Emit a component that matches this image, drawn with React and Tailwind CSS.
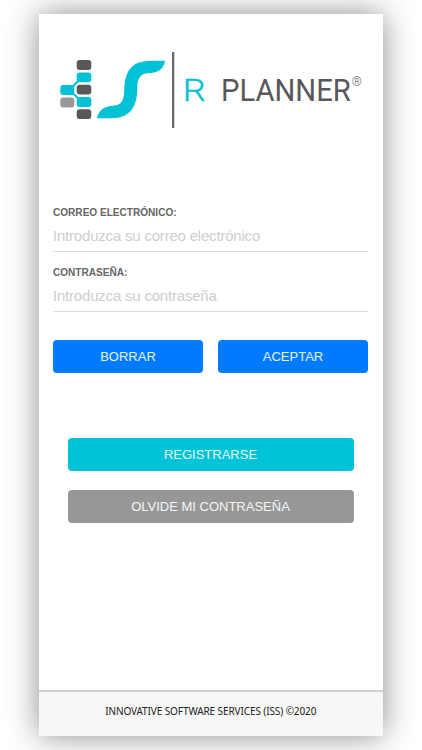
// ============================================================
// Pantalla de acceso de R Planner
// ============================================================

// ── LOGO ──────────────────────────────────────────────────────
function Logo() {
  return (
    <svg viewBox="0 0 315 80" className="block w-[315px] h-[80px]" role="img" aria-label="R Planner">
      {/* Columna de bloques */}
      <g fill="#58585a">
        <rect x="23.7" y="10" width="14.6" height="9.9" rx="3" />
        <rect x="23.7" y="34.7" width="14.6" height="9.9" rx="3" />
        <rect x="23.7" y="59.2" width="14.6" height="9.9" rx="3" />
      </g>
      <g fill="#00c1d5">
        <rect x="23.7" y="22.4" width="14.6" height="9.9" rx="3" />
        <rect x="23.7" y="47" width="14.6" height="9.9" rx="3" />
        <rect x="7.3" y="35" width="14" height="9.9" rx="3" />
      </g>
      <rect x="7.3" y="47.5" width="14" height="10" rx="3" fill="#97989a" />
      {/* Conectores */}
      <path d="M18.5 36.2 20.5 35.8 25.5 30.8M19 43.6 21 44.2 26 49.2" fill="none" stroke="#00c1d5" strokeWidth="2" />
      {/* Letra S ondulada */}
      <path
        d="M44 68.3C45.3 60 52 56 60.3 55.7C68.7 55.3 71 50 71.3 40C71.7 23.3 77 11 97 10.7L112 10.7C111 18.3 105.3 22.7 97 23C87 23.3 84.3 28.3 84.3 38.3C84.3 56.7 77 68.3 58.7 68.3Z"
        fill="#00c1d5"
      />
      <rect x="119" y="2" width="2.3" height="76" fill="#6b6b6d" />
      <g className="font-['Roboto',sans-serif]">
        <text x="129.7" y="51" fontSize="31" fontWeight="300" textLength="23" lengthAdjust="spacingAndGlyphs" fill="#00c1d5" stroke="#00c1d5" strokeWidth="0.4">R</text>
        <text transform="translate(168 51) scale(0.943 1)" fontSize="31" fill="#58585a">PLANNER</text>
        <text x="298.8" y="36.4" fontSize="12.6" fontWeight="300" fill="#58585a">®</text>
      </g>
    </svg>
  )
}

// ── CAMPO ─────────────────────────────────────────────────────
function Campo({ id, etiqueta, tipo, placeholder }) {
  return (
    <div className="h-[60px]">
      <label htmlFor={id} className="block h-4 w-fit origin-left scale-x-[0.915] text-[11px] leading-4 font-bold text-[#666] whitespace-nowrap">
        {etiqueta}
      </label>
      <input
        id={id}
        type={tipo}
        placeholder={placeholder}
        className="block w-full h-8 border-b border-[#dedede] bg-transparent text-[15px] tracking-[-0.2px] text-gray-700 placeholder:text-[#cecece] outline-none"
      />
    </div>
  )
}

// ── BOTÓN ─────────────────────────────────────────────────────
function Boton({ texto, clase }) {
  return (
    <button type="button" className={`h-[33px] rounded-[4px] pt-px text-[13px] text-white/90 whitespace-nowrap ${clase}`}>
      {texto}
    </button>
  )
}

// ── COMPONENTE PRINCIPAL ──────────────────────────────────────
export default function App() {
  return (
    <div className="h-[750px] w-full overflow-hidden bg-white pt-[14px] pl-[39px] font-['Liberation_Sans',Arial,sans-serif]">
      <div className="flex h-[722px] w-[343.5px] flex-col bg-white shadow-[0_0_30px_rgba(0,0,0,0.45)]">

        <main className="flex-1 pl-[14px] pr-[14.5px] pt-[36px]">
          <Logo />

          {/* Formulario */}
          <form className="mt-[74px]">
            <Campo id="correo" etiqueta="CORREO ELECTRÓNICO:" tipo="email" placeholder="Introduzca su correo electrónico" />
            <Campo id="clave" etiqueta="CONTRASEÑA:" tipo="password" placeholder="Introduzca su contraseña" />
            <div className="mt-4 grid grid-cols-2 gap-[15px]">
              <Boton texto="BORRAR" clase="bg-[#007bff]" />
              <Boton texto="ACEPTAR" clase="bg-[#007bff]" />
            </div>
          </form>

          {/* Otras acciones */}
          <div className="mt-[65px] flex flex-col gap-[19px] px-[14.5px]">
            <Boton texto="REGISTRARSE" clase="bg-[#00c3d7]" />
            <Boton texto="OLVIDE MI CONTRASEÑA" clase="bg-[#979797]" />
          </div>
        </main>

        <footer className="flex h-[46px] items-center justify-center border-t-2 border-[#cfcfcf] bg-[#f7f7f7] pb-1.5 font-['Noto_Sans',sans-serif] text-[10px] tracking-[-0.1px] text-[#222] whitespace-nowrap">
          INNOVATIVE SOFTWARE SERVICES (ISS) ©2020
        </footer>

      </div>
    </div>
  )
}
